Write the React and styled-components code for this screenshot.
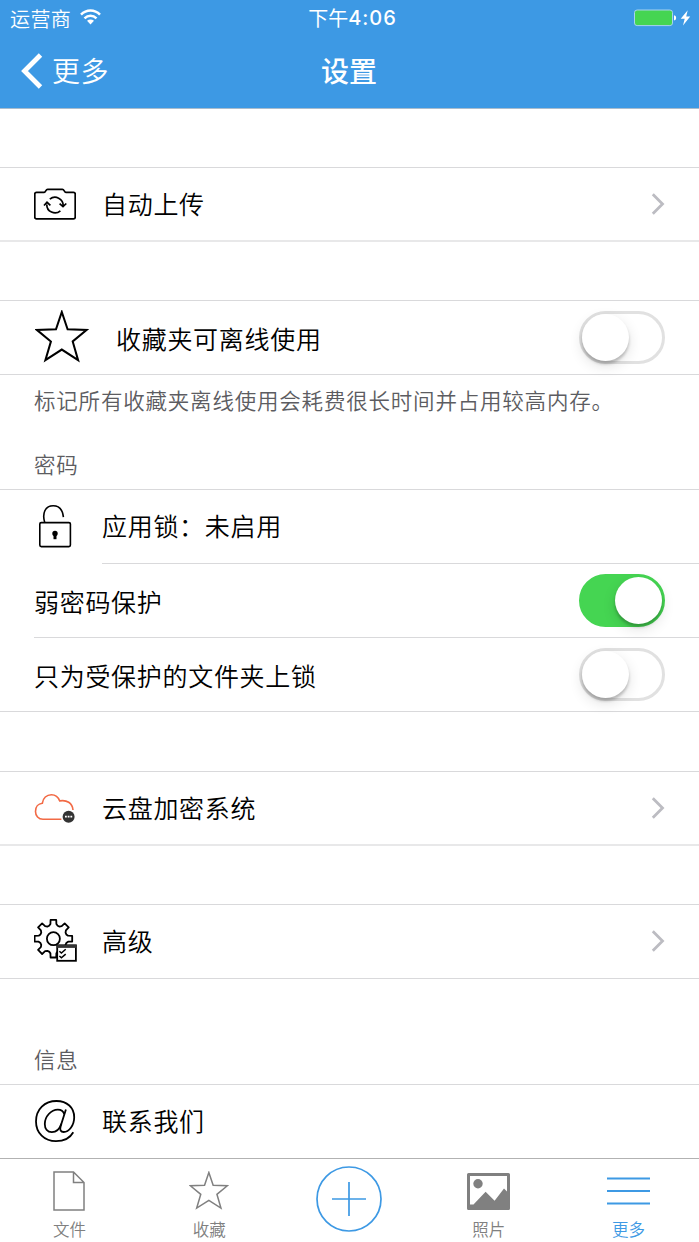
import React, { useState } from "react";
import styled, { createGlobalStyle } from "styled-components";

const blue = "#3d99e4";
const gray = "#808080";
const lineColor = "#d9d9db";

const GlobalStyle = createGlobalStyle`
	* {
		box-sizing: border-box;
	}
	body {
		margin: 0;
		background: #fff;
		font-family: "Noto Sans CJK SC", sans-serif;
		font-weight: 350;
		color: #000;
	}
	svg {
		display: block;
		flex: none;
	}
`;

const Screen = styled.div`
	display: flex;
	flex-direction: column;
	width: 699px;
	height: 1242px;
	overflow: hidden;
	background: #fff;
`;

const Header = styled.header`
	flex: none;
	height: 109px;
	background: ${blue};
	border-bottom: 1px solid #a9bccd;
	color: #fff;
`;

const StatusBar = styled.div`
	display: grid;
	grid-template-columns: 1fr auto 1fr;
	align-items: center;
	height: 35px;
	padding: 0 8px 0 10px;
	font-size: 20px;
	line-height: 35px;
`;

const Carrier = styled.div`
	display: flex;
	align-items: center;
	gap: 9px;
	letter-spacing: 0.4px;

	svg {
		margin-top: -2px;
	}
`;

const Time = styled.div`
	display: flex;
	font-weight: 400;
	padding-left: 4px;
`;

const Digits = styled.span`
	padding-top: 1px;
	font-family: Inter, sans-serif;
	font-weight: 500;
	letter-spacing: 0.9px;
`;

const Power = styled.div`
	display: flex;
	justify-content: flex-end;
	align-items: center;
`;

const NavBar = styled.div`
	display: grid;
	grid-template-columns: 1fr auto 1fr;
	align-items: center;
	height: 72px;
	padding: 0 22px 0 21px;
`;

const BackButton = styled.button`
	display: flex;
	align-items: center;
	gap: 9px;
	padding: 0;
	border: none;
	background: none;
	color: inherit;
	font: inherit;
	font-size: 28px;
	line-height: 40px;
	letter-spacing: 0.4px;
`;

const BackText = styled.span`
	padding-bottom: 3px;
`;

const Title = styled.h1`
	margin: 0;
	padding-bottom: 3px;
	font-size: 28px;
	font-weight: 500;
	line-height: 40px;
`;

const Content = styled.main`
	flex: 1;
	min-height: 0;
`;

const Section = styled.section`
	margin-top: ${(props) => props.$gap || 0}px;
	border-top: 1px solid ${lineColor};
	border-bottom: ${(props) => (props.$soft ? "2px solid #e8e8e9" : `1px solid ${lineColor}`)};
`;

const Row = styled.div`
	display: flex;
	align-items: center;
	height: ${(props) => props.$height || 73}px;
	padding: 0 34px 1px;
`;

const Divider = styled.div`
	height: 1px;
	margin-left: ${(props) => props.$inset}px;
	background: ${lineColor};
`;

const IconBox = styled.div`
	display: flex;
	align-items: center;
	width: ${(props) => props.$width || 68}px;
	padding-left: ${(props) => props.$indent || 0}px;
	padding-bottom: ${(props) => props.$lift || 0}px;
`;

const Label = styled.span`
	flex: 1;
	padding-top: ${(props) => props.$drop || 0}px;
	padding-bottom: 2px;
	font-size: 25px;
	line-height: 36px;
	letter-spacing: 0.7px;
`;

const Note = styled.p`
	height: ${(props) => props.$height}px;
	margin: 0;
	padding: ${(props) => props.$top}px 34px 0;
	font-size: 21.5px;
	line-height: 32px;
	letter-spacing: 0.8px;
	white-space: nowrap;
	color: #5c5c61;
`;

const Track = styled.button`
	display: flex;
	flex: none;
	align-items: center;
	justify-content: ${(props) => (props.$on ? "flex-end" : "flex-start")};
	width: 86px;
	height: 53px;
	padding: 0;
	border: 3px solid ${(props) => (props.$on ? "#45d552" : "#e1e1e1")};
	border-radius: 27px;
	background: ${(props) => (props.$on ? "#45d552" : "#fff")};
`;

const Thumb = styled.span`
	width: 47px;
	height: 47px;
	border-radius: 50%;
	background: #fff;
	box-shadow: 0 3px 3px rgba(0, 0, 0, 0.22), 0 5px 14px rgba(0, 0, 0, 0.12);
`;

const TabBar = styled.nav`
	display: grid;
	grid-template-columns: repeat(5, 1fr);
	flex: none;
	height: 84px;
	border-top: 1px solid #b2b2b2;
	background: #fff;
`;

const Tab = styled.a`
	display: flex;
	flex-direction: column;
	align-items: center;
	padding-top: ${(props) => (props.$plain ? 7 : 6)}px;
	padding-right: ${(props) => (props.$plain ? 0 : 1)}px;
	color: ${(props) => (props.$active ? blue : gray)};
	font-size: 16.5px;
	line-height: 24px;
`;

const TabIcon = styled.div`
	display: flex;
	align-items: center;
	height: 52px;
`;

const starPath =
	"M26.3 1.5 L32 18.4 L50.8 19 L37 30.4 L42.3 48.7 L26.3 38.3 L10.2 48.7 L15.6 30.4 L1.8 19 L20.6 18.4 Z";

const gearPath = () => {
	const points = [];
	const shape = [[-0.32, 13.6], [-0.2, 15], [-0.15, 19], [0.15, 19], [0.2, 15], [0.32, 13.6]];
	for (let i = 0; i < 8; i++) {
		shape.forEach(([offset, radius]) => {
			const angle = (i * Math.PI) / 4 - Math.PI / 2 + offset;
			const x = 20.3 + radius * Math.cos(angle);
			const y = 20.7 + radius * Math.sin(angle);
			points.push(`${x.toFixed(2)} ${y.toFixed(2)}`);
		});
	}
	return `M${points.join("L")}Z`;
};

const WifiIcon = () => (
	<svg width="21" height="16" viewBox="0 0 21 16" fill="none" stroke="#fff" strokeWidth="2.5">
		<path d="M1 5.7C6.4.2 14.6.2 20 5.7" />
		<path d="M4.5 9.3c3.5-3.4 8.5-3.4 12 0" />
		<path d="M7 11.8c2.1-1.8 4.9-1.8 7 0L10.5 15.4Z" fill="#fff" stroke="none" />
	</svg>
);

const BatteryIcon = () => (
	<svg width="57" height="18" viewBox="0 0 57 18">
		<rect x="0.5" y="1" width="38" height="15.6" rx="2.6" fill="#45d552" stroke="#a7d3ee" />
		<path d="M40 6.2q2.2.3 2.2 2.7t-2.2 2.7Z" fill="#fff" />
		<path d="M53.7 1.2 46.7 9.7h4L49 16.5l7.2-9h-4Z" fill="#fff" />
	</svg>
);

const BackIcon = () => (
	<svg width="22" height="36" viewBox="0 0 22 36" fill="none" stroke="#fff" strokeWidth="4.8">
		<path d="M19.5 2 3.5 18l16 16" />
	</svg>
);

const Chevron = () => (
	<svg width="14" height="22" viewBox="0 0 14 22" fill="none" stroke="#bcbcc2" strokeWidth="2.8">
		<path d="m1.8 1.3 9.7 9.7-9.7 9.7" />
	</svg>
);

const CameraIcon = () => (
	<svg width="42" height="32" viewBox="0 0 42 32" fill="none" stroke="#000" strokeWidth="1.7" strokeLinejoin="round">
		<path d="M2.500 4.300h7.600c1.800 0 1.500-3 3.500-3h14.800c2 0 1.700 3 3.500 3h7.600q1.700 0 1.700 1.700v23.300q0 1.500-1.700 1.500h-37Q.8 30.800.8 29.300V6q0-1.700 1.700-1.700Z" />
		<path d="M15.800 11.200a8.200 8.200 0 0 1 13.400 6.600M26.400 22.800a8.200 8.200 0 0 1-13.600-6.400M10 17.500l3-3.200 3.400 3M25.600 15.600l3.400 3.100 3.300-3.200" strokeLinejoin="miter" />
	</svg>
);

const StarIcon = ({ size = 54, width = 2, color = "#000" }) => (
	<svg width={size} height={size} viewBox="0 0 53 52" fill="none" stroke={color} strokeWidth={width}>
		<path d={starPath} />
	</svg>
);

const LockIcon = () => (
	<svg width="42" height="44" viewBox="0 0 42 44" fill="none" stroke="#000" strokeWidth="1.6">
		<path d="M10.7 18.5C8 9.5 11 1.8 19.2 1.8c6.2 0 9.5 4.6 10.2 11.4" />
		<rect x="5.8" y="18.6" width="30.6" height="24" rx="1.5" />
		<circle cx="21" cy="29.4" r="2.7" fill="#000" stroke="none" />
		<path d="M21 29v6.2" strokeWidth="3" />
	</svg>
);

const CloudIcon = () => (
	<svg width="42" height="30" viewBox="0 0 42 30" fill="none">
		<path
			d="M27.4 26.2H9C4.4 26.2 1.5 22.8 1.5 18.4C1.5 14 4.2 10.700 8.300 10.300C8.900 5 12.700 1.700 17.400 1.700C21.300 1.700 24.300 4 25.700 7.900C32.500 6.600 38.400 9.800 39 17"
			stroke="#f26a45"
			strokeWidth="1.6"
		/>
		<circle cx="34.6" cy="23.7" r="6" fill="#333" />
		<path d="M31 23.7h7.4" stroke="#fff" strokeWidth="1.8" strokeDasharray="1.8 0.9" />
	</svg>
);

const GearIcon = () => (
	<svg width="44" height="44" viewBox="0.9 0 44 44" fill="none" stroke="#000" strokeWidth="1.8">
		<path d={gearPath()} strokeLinejoin="round" />
		<circle cx="20.3" cy="20.7" r="6.5" />
		<rect x="24.1" y="27.3" width="18.7" height="15.5" fill="#fff" />
		<path d="M24 28.4h19" stroke="#333" strokeWidth="3" />
		<path d="m26.3 33.2 2 1.8 4.3-3.7M26.3 38l2 1.8 4.3-3.7" strokeWidth="1.5" />
	</svg>
);

const AtIcon = () => (
	<svg width="42" height="44" viewBox="0 0 42 44" fill="none" stroke="#000" strokeWidth="1.8">
		<path d="M39.3 33.2C36 39 30 42.2 22 42.2 10.4 42.2 2 34 2 22.4 2 10.2 10.7 2 22.5 2c10.6 0 17.7 6.5 17.7 16.3 0 8.3-5.3 14.7-10.5 14.7-3.1 0-4-2-3.1-5.7l5.300-16.700" />
		<path d="M30.300 15.300c-1-3.300-3.100-4.700-6.500-4.700-6.700 0-13 7-13 14.300 0 5 2.700 8.200 7 8.200 4.400 0 7.800-3 9.600-8.400" />
	</svg>
);

const FileIcon = () => (
	<svg width="32" height="40" viewBox="0 0 32 40" fill="none" stroke={gray} strokeWidth="1.5">
		<path d="M1 1h19.5L31 11.5V39H1ZM20.5 1v10.5H31" />
	</svg>
);

const PlusIcon = () => (
	<svg width="66" height="66" viewBox="0 0 66 66" fill="none" stroke={blue} strokeWidth="1.7">
		<circle cx="33" cy="33" r="32" />
		<path d="M33 16v34M16 33h34" />
	</svg>
);

const PhotoIcon = () => (
	<svg width="43" height="37" viewBox="0 0 43 37" fill={gray}>
		<path fillRule="evenodd" d="M1.5 0h40Q43 0 43 1.500v34q0 1.500-1.500 1.500h-40Q0 37 0 35.500v-34Q0 0 1.500 0ZM3 3v28.500h3.500L18.600 18.800l9 9L37 15.500l3 3V3Z" />
		<circle cx="11" cy="10.8" r="4.7" />
	</svg>
);

const MoreIcon = () => (
	<svg width="43" height="28" viewBox="0 0 43 28" stroke={blue} strokeWidth="1.8">
		<path d="M0 1.500h43M0 14h43M0 26.500h43" />
	</svg>
);

const Switch = ({ label, initial = false }) => {
	const [on, setOn] = useState(initial);
	return (
		<Track role="switch" aria-label={label} aria-checked={on} $on={on} onClick={() => setOn(!on)}>
			<Thumb />
		</Track>
	);
};

const LinkRow = ({ icon, label, height, lift, arrow = true }) => (
	<Row $height={height}>
		<IconBox $lift={lift}>{icon}</IconBox>
		<Label>{label}</Label>
		{arrow && <Chevron />}
	</Row>
);

const SwitchRow = ({ icon, label, initial }) => (
	<Row>
		{icon && (
			<IconBox $width={82} $indent={1}>
				{icon}
			</IconBox>
		)}
		<Label $drop={4}>{label}</Label>
		<Switch label={label} initial={initial} />
	</Row>
);

const TabItem = ({ icon, label, active }) => (
	<Tab $active={active} $plain={!label}>
		{label ? <TabIcon>{icon}</TabIcon> : icon}
		{label}
	</Tab>
);

const App = () => {
	return (
		<Screen>
			<GlobalStyle />
			<Header>
				<StatusBar>
					<Carrier>
						运营商
						<WifiIcon />
					</Carrier>
					<Time>
						下午<Digits>4:06</Digits>
					</Time>
					<Power>
						<BatteryIcon />
					</Power>
				</StatusBar>
				<NavBar>
					<BackButton>
						<BackIcon />
						<BackText>更多</BackText>
					</BackButton>
					<Title>设置</Title>
				</NavBar>
			</Header>
			<Content>
				<Section $gap={58} $soft>
					<LinkRow icon={<CameraIcon />} label="自动上传" height={72} />
				</Section>
				<Section $gap={58}>
					<SwitchRow icon={<StarIcon />} label="收藏夹可离线使用" />
				</Section>
				<Note $height={64} $top={9}>
					标记所有收藏夹离线使用会耗费很长时间并占用较高内存。
				</Note>
				<Note $height={50} $top={9}>
					密码
				</Note>
				<Section>
					<LinkRow icon={<LockIcon />} label="应用锁：未启用" lift={1} arrow={false} />
					<Divider $inset={102} />
					<SwitchRow label="弱密码保护" initial />
					<Divider $inset={34} />
					<SwitchRow label="只为受保护的文件夹上锁" />
				</Section>
				<Section $gap={59} $soft>
					<LinkRow icon={<CloudIcon />} label="云盘加密系统" height={72} />
				</Section>
				<Section $gap={58}>
					<LinkRow icon={<GearIcon />} label="高级" lift={2} />
				</Section>
				<Note $height={105} $top={64}>
					信息
				</Note>
				<Section>
					<LinkRow icon={<AtIcon />} label="联系我们" arrow={false} />
				</Section>
			</Content>
			<TabBar>
				<TabItem icon={<FileIcon />} label="文件" />
				<TabItem icon={<StarIcon size={40} width={2} color={gray} />} label="收藏" />
				<TabItem icon={<PlusIcon />} />
				<TabItem icon={<PhotoIcon />} label="照片" />
				<TabItem icon={<MoreIcon />} label="更多" active />
			</TabBar>
		</Screen>
	);
};

export default App;
